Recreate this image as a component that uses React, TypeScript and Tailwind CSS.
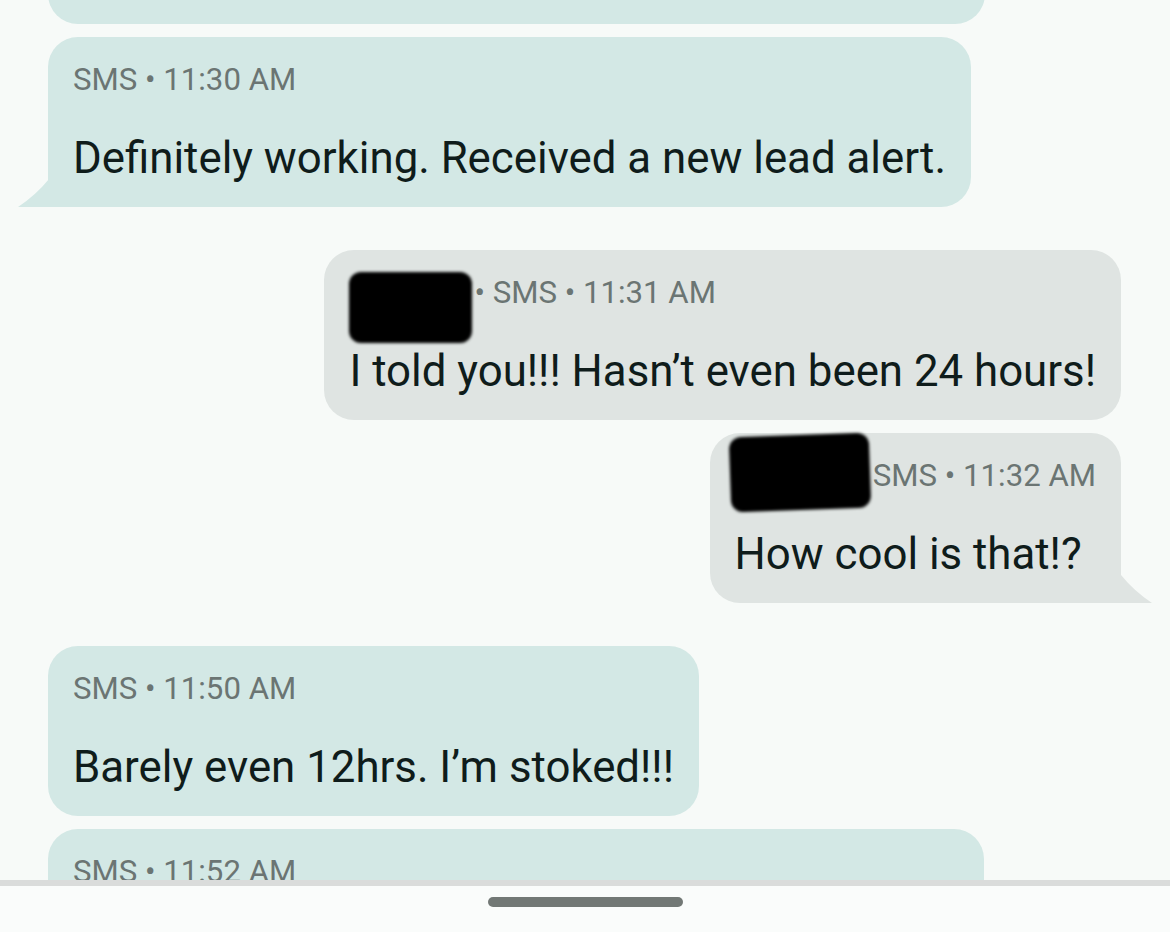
import React from 'react';

type Msg = {
  side: 'in' | 'out';
  meta: string;
  text: string;
  tail?: boolean;
  w?: string;
  redact?: { nameW: number; left: number; top: number; w: number; h: number; rot: number };
};

const messages: Msg[] = [
  { side: 'in', meta: 'SMS • 11:29 AM', text: 'Is the new landing page live yet?', w: 'w-[937px]' },
  { side: 'in', meta: 'SMS • 11:30 AM', text: 'Definitely working. Received a new lead alert.', tail: true },
  {
    side: 'out',
    meta: '• SMS • 11:31 AM',
    text: 'I told you!!! Hasn’t even been 24 hours!',
    redact: { nameW: 118, left: 0, top: -3, w: 123, h: 71, rot: 0 },
  },
  {
    side: 'out',
    meta: '• SMS • 11:32 AM',
    text: 'How cool is that!?',
    tail: true,
    redact: { nameW: 113, left: -5, top: -23, w: 140, h: 75, rot: -2 },
  },
  { side: 'in', meta: 'SMS • 11:50 AM', text: 'Barely even 12hrs. I’m stoked!!!' },
  { side: 'in', meta: 'SMS • 11:52 AM', text: 'Already got two more inquiries.', w: 'w-[936px]' },
];

const Bubble: React.FC<{ msg: Msg }> = ({ msg }) => {
  const incoming = msg.side === 'in';
  const bg = incoming ? 'bg-[#d3e8e5]' : 'bg-[#dfe4e2]';
  const corners = msg.tail
    ? incoming
      ? 'rounded-[30px] rounded-bl-none'
      : 'rounded-[30px] rounded-br-none'
    : 'rounded-[30px]';

  return (
    <div className={`relative ${incoming ? 'self-start ml-[48px]' : 'self-end mr-[49px]'}`}>
      <div className={`${bg} ${corners} ${msg.w ?? ''} px-[25px] pt-[25px] pb-[25px]`}>
        <div className="flex items-center h-[36px] text-[31.2px] leading-[36px] text-[#6b7573] whitespace-nowrap">
          {msg.redact && (
            <span className="relative inline-block h-[36px] mr-[7px]" style={{ width: msg.redact.nameW }}>
              <span
                className="absolute z-10 bg-black rounded-[12px] blur-[1.5px]"
                style={{
                  left: msg.redact.left,
                  top: msg.redact.top,
                  width: msg.redact.w,
                  height: msg.redact.h,
                  transform: `rotate(${msg.redact.rot}deg)`,
                }}
              />
            </span>
          )}
          <span>{msg.meta}</span>
        </div>
        <div className="mt-[36px] h-[48px] text-[43.8px] leading-[48px] text-[#0f1c1b] whitespace-nowrap">
          {msg.text}
        </div>
      </div>
      {msg.tail && (
        <svg
          className={`absolute bottom-0 ${incoming ? '-left-[30px]' : '-right-[31px]'}`}
          width="31"
          height="28"
          viewBox="0 0 31 28"
        >
          {incoming ? (
            <path d="M31 0 L31 28 L0 28 Q18 16 31 0 Z" fill="#d3e8e5" />
          ) : (
            <path d="M0 0 L0 28 L31 28 Q13 16 0 0 Z" fill="#dfe4e2" />
          )}
        </svg>
      )}
    </div>
  );
};

export default function App() {
  const gapAfter = (i: number) => {
    const next = messages[i + 1];
    if (!next) return '';
    return next.side === messages[i].side ? 'mb-[13px]' : 'mb-[43px]';
  };

  return (
    <div className="w-[1170px] h-[932px] bg-[#f7faf8] flex flex-col overflow-hidden font-['Roboto',sans-serif]">
      <div className="h-[880px] overflow-hidden">
        <div className="flex flex-col -mt-[146px]">
          {messages.map((m, i) => (
            <div key={i} className={`flex flex-col ${gapAfter(i)}`}>
              <Bubble msg={m} />
            </div>
          ))}
        </div>
      </div>
      <div className="h-[6px] bg-[#dadcdb]" />
      <div className="flex-1 bg-[#fafcfb] flex justify-center pt-[11px]">
        <div className="w-[195px] h-[10px] rounded-full bg-[#727875]" />
      </div>
    </div>
  );
}
